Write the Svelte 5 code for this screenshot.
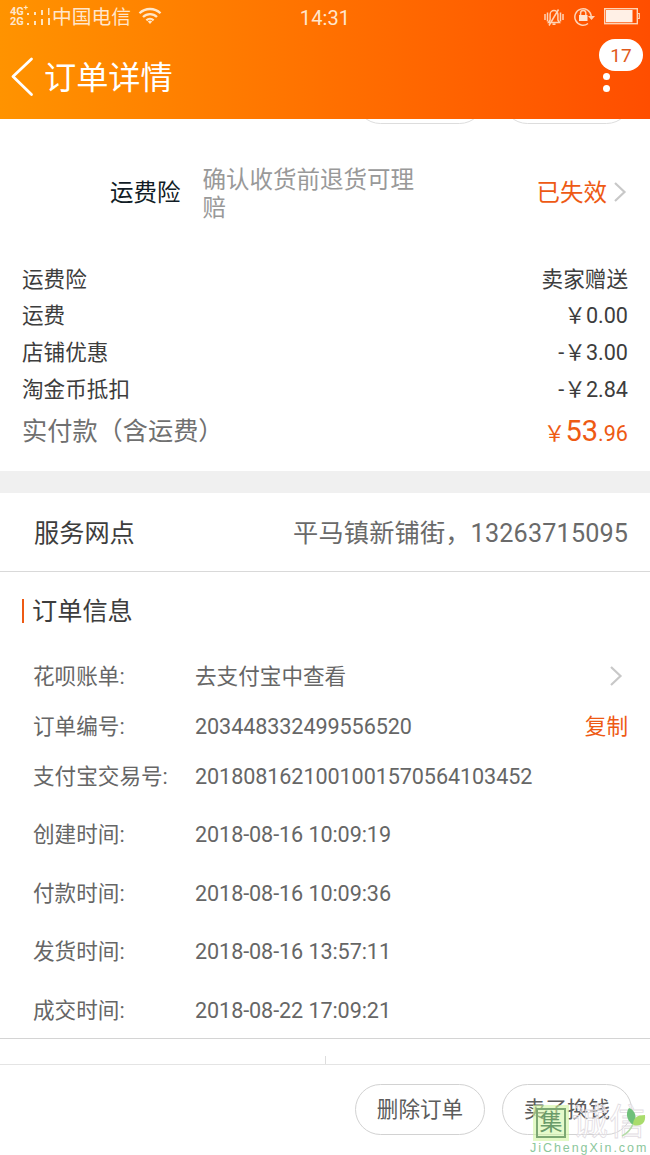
<script lang="ts">
  interface Row {
    label: string;
    value: string;
  }

  const fees: Row[] = [
    { label: '运费险', value: '卖家赠送' },
    { label: '运费', value: '￥0.00' },
    { label: '店铺优惠', value: '-￥3.00' },
    { label: '淘金币抵扣', value: '-￥2.84' },
  ];

  const times: Row[] = [
    { label: '创建时间:', value: '2018-08-16 10:09:19' },
    { label: '付款时间:', value: '2018-08-16 10:09:36' },
    { label: '发货时间:', value: '2018-08-16 13:57:11' },
    { label: '成交时间:', value: '2018-08-22 17:09:21' },
  ];

  const unread = 17;
</script>

{#snippet chevron()}
  <svg class="chevron" width="14" height="22" viewBox="0 0 14 22" fill="none" stroke="#c8c8c8" stroke-width="2.2">
    <path d="M2 2l9.500 9L2 20"></path>
  </svg>
{/snippet}

<div class="page">
  <header>
    <div class="status">
      <div class="status-left">
        <div class="network"><span>4G<sup>+</sup></span><span>2G</span></div>
        <svg class="signal" width="24" height="18" viewBox="0 0 24 18" fill="#ffe3bd">
          <path d="M0 5h2v2H0zM0 15h2v2H0zM7 4h2v3H7zM7 13h2v4H7zM14 2h2v5h-2zM14 11h2v6h-2zM21 0h1.500v7H21zM21 10h2v7h-2z"></path>
        </svg>
        <span class="carrier">中国电信</span>
        <svg class="wifi" width="24" height="18" viewBox="0 0 24 18" fill="none" stroke="#ffe6c8" stroke-width="2.3">
          <path d="M1.5 6.3a15 15 0 0 1 21 0M5 10a10 10 0 0 1 14 0M8.4 13.3a5.2 5.2 0 0 1 7.2 0"></path>
          <path d="M12 17l-2.200-2.400a3.2 3.2 0 0 1 4.400 0z" fill="#ffe6c8" stroke="none"></path>
        </svg>
      </div>
      <span class="clock">14:31</span>
      <div class="status-right">
        <svg width="22" height="18" viewBox="0 0 22 18" fill="none" stroke="#ffd3b5" stroke-width="1.5">
          <path d="M2 6v6M4.500 4.500v9M17.500 4.500v9M20 6v6"></path>
          <path d="M5.500 14.500h11l-1.600-2.500V6.500a3.9 3.900 0 0 0-7.800 0V12zM9.500 16.300h3M6 17.500L15.500 1.500"></path>
        </svg>
        <svg width="23" height="19" viewBox="0 0 23 19" fill="none" stroke="#ffd3b5" stroke-width="1.5">
          <path d="M15 16.500A8.200 8.200 0 1 1 18.200 9v1"></path>
          <path d="M15 9h7l-3.500 4z" fill="#ffd3b5" stroke="none"></path>
          <path d="M6 8h8.500v6H6z" fill="#ffe4d2" stroke="none"></path>
          <path d="M7.600 8V6a2.600 2.600 0 0 1 5.200 0v2"></path>
        </svg>
        <svg width="36" height="17" viewBox="0 0 36 17">
          <rect x=".7" y=".7" width="32.600" height="15" fill="none" stroke="#ffd3b5" stroke-width="1.4"></rect>
          <path d="M2 2h26.500v12.300H2z" fill="#fff0e6"></path>
          <path d="M33 5.500h2.300v5H33" fill="none" stroke="#ffd3b5" stroke-width="1.2"></path>
        </svg>
      </div>
    </div>
    <div class="titlebar">
      <svg width="23" height="40" viewBox="0 0 23 40" fill="none" stroke="#fff" stroke-width="2.8" stroke-linecap="round" stroke-linejoin="round">
        <path d="M20.500 2L2 19.500l18.500 18"></path>
      </svg>
      <h1>订单详情</h1>
      <div class="more">
        <i></i><i></i>
        <span class="badge">{unread}</span>
      </div>
    </div>
  </header>

  <div class="clipped">
    <span></span>
    <span></span>
  </div>

  <section class="insurance">
    <span class="name">运费险</span>
    <span class="desc">确认收货前退货可理赔</span>
    <span class="state">已失效</span>
    {@render chevron()}
  </section>

  <section class="fees">
    {#each fees as fee}
      <div class="fee">
        <span>{fee.label}</span>
        <span>{fee.value}</span>
      </div>
    {/each}
    <div class="fee total">
      <span>实付款（含运费）</span>
      <span class="price">￥<b>53</b>.96</span>
    </div>
  </section>

  <section class="outlet">
    <span>服务网点</span>
    <span class="contact">平马镇新铺街，13263715095</span>
  </section>

  <section class="info">
    <h2>订单信息</h2>
    <div class="row">
      <span class="key">花呗账单:</span>
      <span>去支付宝中查看</span>
      {@render chevron()}
    </div>
    <div class="row">
      <span class="key">订单编号:</span>
      <span class="number">203448332499556520</span>
      <button class="copy">复制</button>
    </div>
    <div class="row">
      <span class="key">支付宝交易号:</span>
      <span class="number">2018081621001001570564103452</span>
    </div>
    <div class="times">
      {#each times as time}
        <div class="row time">
          <span class="key">{time.label}</span>
          <span class="number">{time.value}</span>
        </div>
      {/each}
    </div>
  </section>

  <div class="contact-bar"><i></i></div>

  <footer>
    <button>删除订单</button>
    <button>卖了换钱</button>

    <div class="watermark">
      <div class="mark-top">
        <span class="seal">集</span>
        <span class="outline">诚信</span>
        <svg class="leaf" width="28" height="32" viewBox="0 0 28 32">
          <path d="M13 18C7 14 5 6 9 1c6 2 9 9 4 17z" fill="#6fc07a"></path>
          <path d="M13 18c0-7 4-10 12-10 1 8-4 12-12 10z" fill="#a9dc6c"></path>
          <path d="M13 17q-3 8-11 12" fill="none" stroke="#b5dca8" stroke-width="1.6"></path>
        </svg>
      </div>
      <span class="domain">JiChengXin.com</span>
    </div>
  </footer>
</div>

<style>
  :global(body) {
    margin: 0;
    background: #fff;
  }

  .page {
    width: 650px;
    height: 1155px;
    overflow: hidden;
    display: flex;
    flex-direction: column;
    font-family: Roboto, 'Noto Sans CJK SC', sans-serif;
    font-size: 21.6px;
    line-height: 1;
    color: #3d3d3d;
    background: #fff;
  }

  h1,
  h2,
  b {
    margin: 0;
    font-weight: 400;
  }

  button {
    padding: 0;
    border: 0;
    background: none;
    font: inherit;
    color: inherit;
  }

  svg {
    display: block;
    flex: none;
  }

  header {
    height: 119px;
    background: linear-gradient(90deg, #ff9300, #ff4e00);
    color: #fff;
  }

  .status {
    height: 34px;
    display: grid;
    grid-template-columns: 1fr auto 1fr;
    align-items: center;
    padding: 0 10px;
    color: #ffe6cc;
  }

  .status-left,
  .status-right {
    display: flex;
    align-items: center;
  }

  .status-right {
    justify-content: flex-end;
    gap: 8px;
    margin-top: -1px;
  }

  .network {
    display: flex;
    flex-direction: column;
    width: 17px;
    font-size: 11px;
    font-weight: 700;
    line-height: 10px;
    white-space: nowrap;
  }

  .network sup {
    font-size: 8px;
    line-height: 0;
  }

  .carrier {
    margin-left: 1px;
    padding-top: 2px;
    font-size: 19.8px;
  }

  .wifi {
    margin: -2px 0 0 7px;
  }

  .clock {
    padding-top: 1px;
    font-size: 20px;
    letter-spacing: 0.1px;
  }

  .titlebar {
    height: 85px;
    display: flex;
    align-items: center;
    padding: 0 40px 0 11px;
    box-sizing: border-box;
  }

  h1 {
    flex: 1;
    margin-left: 10px;
    padding-top: 3px;
    font-size: 32.2px;
  }

  .more {
    position: relative;
    display: flex;
    flex-direction: column;
    gap: 5px;
    margin-top: 11px;
  }

  .more i {
    width: 7px;
    height: 7px;
    border-radius: 50%;
    background: #fff;
  }

  .badge {
    position: absolute;
    left: -4px;
    bottom: 21px;
    width: 44px;
    height: 32px;
    border-radius: 16px;
    background: #fff;
    color: #e05a1c;
    font-size: 19px;
    line-height: 34px;
    text-align: center;
  }

  /* lower edge of the buttons scrolled beneath the header */
  .clipped {
    height: 5px;
    display: flex;
    justify-content: flex-end;
    align-items: flex-end;
    gap: 17px;
    padding-right: 18px;
    overflow: hidden;
  }

  .clipped span {
    width: 128px;
    height: 49px;
    border: 1px solid #ddd;
    border-radius: 26px;
  }

  .insurance {
    height: 136px;
    display: flex;
    align-items: center;
    padding: 0 23px 0 110px;
    font-size: 23.5px;
  }

  .insurance span {
    padding-top: 4px;
  }

  .name {
    color: #111c26;
  }

  .desc {
    width: 216px;
    margin-left: 22px;
    color: #999;
    line-height: 28px;
  }

  .state {
    margin-left: auto;
    color: #ee5a14;
  }

  .insurance .chevron {
    margin-left: 6px;
  }

  .fees {
    height: 210px;
    padding: 1px 22px 0;
    border-bottom: 22px solid #f0f0f0;
  }

  .fee {
    height: 36.7px;
    display: flex;
    justify-content: space-between;
    align-items: center;
  }

  .total {
    height: 48px;
    font-size: 25.2px;
    color: #707070;
  }

  .price {
    font-size: 21.6px;
    color: #ee5a14;
  }

  .price b {
    font-size: 29px;
  }

  .outlet {
    height: 74px;
    display: flex;
    justify-content: space-between;
    align-items: center;
    padding: 4px 22px 0 34px;
    border-bottom: 1px solid #d9d9d9;
    font-size: 25.2px;
  }

  .contact {
    margin-right: -0.2px;
    letter-spacing: 0.17px;
    color: #6a6a6a;
  }

  .info {
    height: 466px;
    border-bottom: 1px solid #d4d4d4;
    color: #666;
  }

  h2 {
    display: flex;
    align-items: center;
    height: 80px;
    padding-left: 22px;
    font-size: 25.2px;
    color: #3d3d3d;
  }

  h2::before {
    content: '';
    width: 2px;
    height: 24px;
    margin: -2px 8px 0 0;
    background: #ee5a14;
  }

  .row {
    height: 50px;
    display: flex;
    align-items: center;
    padding: 0 22px 0 33px;
  }

  .times {
    margin-top: 4px;
  }

  .time {
    height: 58.4px;
  }

  .key {
    width: 162px;
  }

  .number {
    letter-spacing: -0.09px;
  }

  .row .chevron {
    margin: -2px 5px 0 auto;
  }

  .copy {
    margin-left: auto;
    color: #ee5a14;
  }

  .contact-bar {
    height: 25px;
    display: flex;
    justify-content: center;
    align-items: flex-end;
    border-bottom: 1px solid #e4e4e4;
  }

  .contact-bar i {
    width: 1px;
    height: 8px;
    background: #ddd;
  }

  footer {
    position: relative;
    flex: 1;
    display: flex;
    justify-content: flex-end;
    align-items: center;
    gap: 17px;
    padding-right: 18px;
  }

  footer button {
    width: 130px;
    height: 51px;
    margin-top: -1px;
    padding-top: 1px;
    border: 1px solid #d2d2d2;
    border-radius: 26px;
    color: #5c5c5c;
  }

  .watermark {
    position: absolute;
    left: 530px;
    bottom: 0;
    width: 120px;
  }

  .mark-top {
    position: relative;
    display: flex;
    align-items: center;
    height: 34px;
    padding-left: 6px;
  }

  .seal {
    width: 26px;
    height: 26px;
    border: 2px solid #7da873;
    outline: 3px solid rgba(208, 245, 160, 0.6);
    background: rgba(208, 245, 160, 0.55);
    color: #6a9b6a;
    font-size: 23px;
    line-height: 26px;
    text-align: center;
  }

  .outline {
    margin-left: 6px;
    font-size: 36px;
    letter-spacing: 1px;
    color: rgba(255, 255, 255, 0.35);
    -webkit-text-stroke: 0.8px #e2dce2;
    white-space: nowrap;
  }

  .leaf {
    position: absolute;
    left: 90px;
    top: 1px;
  }

  .domain {
    display: block;
    height: 15px;
    font-family: 'Liberation Sans', sans-serif;
    font-size: 12.5px;
    letter-spacing: 1.95px;
    line-height: 17px;
    color: #8cc79c;
    white-space: nowrap;
  }
</style>
